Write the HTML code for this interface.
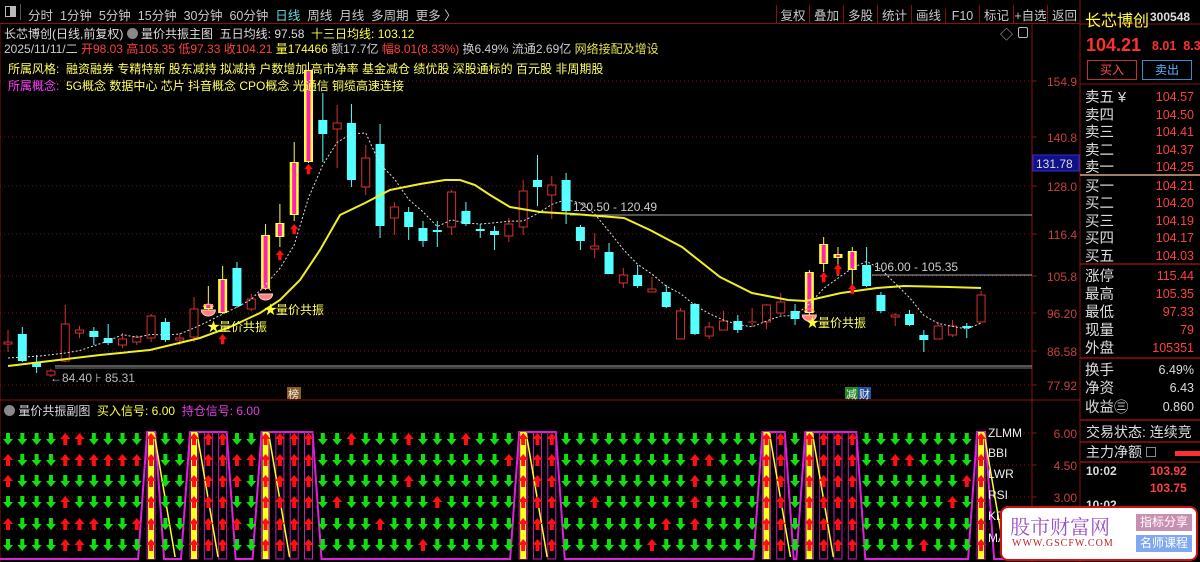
<!DOCTYPE html>
<html><head><meta charset="utf-8">
<style>
*{margin:0;padding:0;box-sizing:border-box}
body{width:1200px;height:562px;background:#000;overflow:hidden;position:relative;font-family:"Liberation Sans","Noto Sans CJK SC",sans-serif;color:#ccc}
.a{position:absolute;white-space:nowrap}
svg{position:absolute;left:0;top:0}
</style></head><body>
<svg id="s" width="1200" height="562" xmlns="http://www.w3.org/2000/svg" font-family="Liberation Sans, Noto Sans CJK SC, sans-serif"></svg>

<div class="a" style="left:0;top:0;width:1080px;height:24px;border-bottom:1px solid #8a1010"></div>
<div class="a" style="left:5px;top:6px;width:11px;height:11px;border:1px solid #bbb"></div>
<div class="a" style="left:10px;top:7px;width:5px;height:9px;background:#bbb"></div>
<div class="a" style="left:20px;top:4px;width:1px;height:16px;background:#555"></div>
<div class="a" style="left:28px;top:5px;font-size:12.5px;color:#c8c8c8;word-spacing:0">分时&nbsp;&nbsp;1分钟&nbsp;&nbsp;5分钟&nbsp;&nbsp;15分钟&nbsp;&nbsp;30分钟&nbsp;&nbsp;60分钟&nbsp;&nbsp;<span style="color:#5fdede">日线</span>&nbsp;&nbsp;周线&nbsp;&nbsp;月线&nbsp;&nbsp;多周期&nbsp;&nbsp;更多 〉</div>
<div class="a" style="left:776px;top:5px;font-size:12.5px;color:#c8c8c8">
<span style="display:inline-block;width:33px;text-align:center;border-left:1px solid #8a1010">复权</span><span style="display:inline-block;width:34px;text-align:center;border-left:1px solid #8a1010">叠加</span><span style="display:inline-block;width:34px;text-align:center;border-left:1px solid #8a1010">多股</span><span style="display:inline-block;width:34px;text-align:center;border-left:1px solid #8a1010">统计</span><span style="display:inline-block;width:34px;text-align:center;border-left:1px solid #8a1010">画线</span><span style="display:inline-block;width:34px;text-align:center;border-left:1px solid #8a1010">F10</span><span style="display:inline-block;width:34px;text-align:center;border-left:1px solid #8a1010">标记</span><span style="display:inline-block;width:34px;text-align:center;border-left:1px solid #8a1010">+自选</span><span style="display:inline-block;width:34px;text-align:center;border-left:1px solid #8a1010">返回</span></div>

<div class="a" style="left:4px;top:25px;font-size:12px;color:#ddd">长芯博创(日线,前复权) <span style="display:inline-block;width:11px;height:11px;border-radius:50%;background:#888;vertical-align:-1px"></span> 量价共振主图&nbsp; 五日均线: 97.58&nbsp; <span style="color:#ffff40">十三日均线: 103.12</span></div>
<div class="a" style="left:4px;top:40px;font-size:12px;color:#ccc">2025/11/11/二 <span style="color:#ff4040">开98.03 高105.35 低97.33 收104.21</span> <span style="color:#ffff40">量174466</span> 额17.7亿 <span style="color:#ff4040">幅8.01(8.33%)</span> 换6.49% 流通2.69亿 <span style="color:#e0e050">网络接配及增设</span></div>
<div class="a" style="left:8px;top:60px;font-size:12px;color:#ffff60">所属风格: &nbsp;融资融券 专精特新 股东减持 拟减持 户数增加 高市净率 基金减仓 绩优股 深股通标的 百元股 非周期股</div>
<div class="a" style="left:8px;top:77px;font-size:12px;color:#ffff60"><span style="color:#ff40ff">所属概念:</span> &nbsp;5G概念 数据中心 芯片 抖音概念 CPO概念 光通信 铜缆高速连接</div>
<div class="a" style="left:1000px;top:24px;font-size:13px;color:#bbb">◇</div>
<div class="a" style="left:1018px;top:27px;width:10px;height:11px;border:1px solid #bbb;border-radius:2px"></div>

<div class="a" style="left:1085px;top:7px;font-size:16px;color:#ffff40">长芯博创</div>
<div class="a" style="left:1150px;top:10px;font-size:12px;color:#ddd;font-weight:bold">300548</div>
<div class="a" style="left:1086px;top:35px;font-size:18px;color:#ff3030;font-weight:bold">104.21</div>
<div class="a" style="left:1152px;top:39px;font-size:12.5px;color:#ff3030;font-weight:bold">8.01&nbsp; 8.33%</div>
<div class="a" style="left:1087px;top:60px;width:50px;height:20px;border:1px solid #c03030;color:#ff5050;font-size:12px;text-align:center;line-height:18px">买入</div>
<div class="a" style="left:1142px;top:60px;width:50px;height:20px;border:1px solid #3a8ad0;color:#60b0ff;font-size:12px;text-align:center;line-height:18px">卖出</div>
<div class="a" style="left:1086px;top:422px;font-size:14px;color:#ddd">交易状态: 连续竞</div>
<div class="a" style="left:1086px;top:442px;font-size:14px;color:#ddd">主力净额 <span style="display:inline-block;width:10px;height:10px;border:1px solid #888;vertical-align:0"></span></div>
<div class="a" style="left:1175px;top:451px;width:25px;height:5px;background:#ff3030"></div>
<div class="a" style="left:1086px;top:464px;font-size:12px;color:#ddd;font-weight:bold">10:02</div>
<div class="a" style="left:1150px;top:464px;font-size:12px;color:#ff4040;font-weight:bold">103.92</div>
<div class="a" style="left:1150px;top:481px;font-size:12px;color:#ff4040;font-weight:bold">103.75</div>
<div class="a" style="left:1086px;top:498px;font-size:12px;color:#ddd;font-weight:bold">10:02</div>

<div class="a" style="left:4px;top:402px;font-size:12px;color:#ddd"><span style="display:inline-block;width:11px;height:11px;border-radius:50%;background:#888;vertical-align:-1px"></span> 量价共振副图&nbsp; <span style="color:#ffff40">买入信号: 6.00</span>&nbsp; <span style="color:#e040e0">持仓信号: 6.00</span></div>

<div class="a" style="left:1000px;top:506px;width:198px;height:55px;background:#fff;border:2px solid #d01010;border-radius:8px"></div>
<div class="a" style="left:1010px;top:511px;font-size:20px;color:#9a50c8;font-family:'Noto Serif CJK SC',serif">股市财富网</div>
<div class="a" style="left:1012px;top:538px;font-size:10px;color:#c02020;font-family:'Liberation Serif',serif;letter-spacing:1px">WWW.GSCFW.COM</div>
<div class="a" style="left:1136px;top:514px;width:56px;height:17px;background:#c890b0;color:#fff;font-size:12px;text-align:center;line-height:17px">指标分享</div>
<div class="a" style="left:1136px;top:535px;width:56px;height:17px;background:#80a8f0;color:#fff;font-size:12px;text-align:center;line-height:17px">名师课程</div>

<script>
var s=document.getElementById('s'),h='';
function L(x1,y1,x2,y2,c,w,d){h+='<line x1="'+x1+'" y1="'+y1+'" x2="'+x2+'" y2="'+y2+'" stroke="'+c+'" stroke-width="'+(w||1)+'"'+(d?' stroke-dasharray="'+d+'"':'')+'/>';}
function R(x,y,w,hh,f,st,sw){h+='<rect x="'+x+'" y="'+y+'" width="'+w+'" height="'+hh+'" fill="'+f+'"'+(st?' stroke="'+st+'" stroke-width="'+(sw||1)+'"':'')+'/>';}
function T(x,y,t,c,fs,a){h+='<text x="'+x+'" y="'+y+'" fill="'+c+'" font-size="'+(fs||12)+'"'+(a?' text-anchor="'+a+'"':'')+'>'+t+'</text>';}
L(1032,24,1032,562,'#8a1010');L(1080,0,1080,562,'#8a1010');L(0,400,1080,400,'#8a1010');L(0,24,0,562,'#8a1010');
var gl=[[81,'154.9'],[137,'140.8'],[186,'128.0'],[234,'116.4'],[276,'105.8'],[313,'96.20'],[351,'86.58'],[385,'77.92']];
gl.forEach(function(g){L(0,g[0],1032,g[0],'#7a1515',1,'1 3');L(1032,g[0],1037,g[0],'#8a1010');T(1077,g[0]+5,g[1],'#c84040',12,'end');});
R(1033,155,46,16,'#10108a','#3030d0');T(1036,168,'131.78','#ddd',12);
L(55,366,1032,366,'#aaa',1);L(55,368,1032,368,'#777',1);
T(50,382,'←84.40 ⊦ 85.31','#bbb',12);
L(570,215,1032,215,'#aaa');T(573,211,'120.50 - 120.49','#ccc',12);
L(872,275,1032,275,'#aaa');T(874,271,'106.00 - 105.35','#ccc',12);
var C=[[0,'r',342,344,330,352],[1,'c',334,361,327,362],[2,'c',362,367,355,373],[3,'r',371,375,369,377],[4,'r',324,361,305,362],[5,'r',330,333,326,338],[6,'c',331,337,327,345],[7,'c',338,343,324,345],[8,'r',339,345,333,348],[9,'r',337,342,335,345],[10,'r',316,338,314,342],[11,'c',322,340,318,342],[12,'r',338,340,333,345],[13,'r',309,337,297,342],[14,'m',304,309,286,311],[15,'m',279,313,266,314],[16,'c',268,306,262,308],[17,'r',299,309,294,311],[18,'m',235,289,224,290],[19,'m',223,237,204,247],[20,'m',162,215,142,221],[21,'m',70,162,62,163],[22,'c',120,134,93,162],[23,'r',123,129,105,168],[24,'c',123,180,104,187],[25,'r',158,187,145,195],[26,'c',144,226,124,238],[27,'r',207,218,202,235],[28,'c',212,227,207,240],[29,'c',228,241,221,247],[30,'c',230,232,221,247],[31,'r',192,227,190,235],[32,'c',211,224,202,226],[33,'c',229,231,224,238],[34,'c',231,235,226,250],[35,'r',224,236,218,242],[36,'r',191,227,180,235],[37,'c',180,187,155,206],[38,'r',185,195,176,219],[39,'c',180,211,173,224],[40,'c',227,241,225,250],[41,'r',246,249,233,258],[42,'c',252,274,243,274],[43,'r',275,283,268,288],[44,'c',275,286,265,288],[45,'r',289,292,277,292],[46,'c',292,307,285,308],[47,'r',311,339,308,339],[48,'c',304,334,303,335],[49,'r',327,336,322,339],[50,'r',321,330,311,330],[51,'c',321,330,315,333],[52,'r',322,323,308,327],[53,'r',305,322,304,329],[54,'r',302,313,293,315],[55,'c',311,319,304,325],[56,'m',272,313,270,315],[57,'m',244,264,237,272],[58,'m',254,258,247,276],[59,'m',251,270,247,286],[60,'c',265,286,247,287],[61,'c',295,311,292,313],[62,'r',315,317,313,326],[63,'c',314,325,310,326],[64,'c',335,340,330,352],[65,'r',326,339,322,339],[66,'r',326,335,320,337],[67,'c',326,328,323,338],[68,'r',295,322,291,322]];
function X(i){return 8+i*14.31;}
var closes=[];
C.forEach(function(c){var x=X(c[0]),t=c[1],bt=c[2],bb=c[3];
 closes.push(t=='c'?bb:bt);
 var wc=t=='c'?'#54ffff':(t=='m'?'#ffff30':'#d83030');
 L(x,c[4],x,bt,wc);L(x,bb,x,c[5],wc);
 if(t=='c')R(x-4.5,bt,9,Math.max(bb-bt,1.5),'#54ffff');
 else if(t=='r'){if(bb-bt<2)L(x-4.5,bt,x+4.5,bt,'#d83030');else R(x-4,bt,8,bb-bt,'none','#d83030');}
 else {R(x-4.5,bt,9,Math.max(bb-bt,3),'#ffff30');R(x-2,bt+1,4,Math.max(bb-bt-2,1),'#ff20c0');}
});
var p='';for(var i=4;i<closes.length;i++){var a=0;for(var k=0;k<5;k++)a+=closes[i-k];p+=(i==4?'M':'L')+X(i)+','+(a/5).toFixed(1);}
p='M8,358L40,356L'+p.slice(1);
h+='<path d="'+p+'" fill="none" stroke="#ddd" stroke-width="1" stroke-dasharray="2 2"/>';
h+='<path d="M8,366 L50,361 L100,355 L150,350 L200,338 L230,327 L260,313 L280,300 L300,280 L320,250 L340,215 L365,203 L390,190 L420,184 L445,180 L460,180 L475,185 L490,195 L510,207 L540,212 L574,214 L624,218 L650,230 L682,247 L720,277 L752,293 L788,300 L806,301 L841,293 L877,288 L904,286 L949,287 L981,288" fill="none" stroke="#f0f020" stroke-width="2"/>';
function up(x,y,c,sc){sc=sc||1;h+='<path d="M'+x+','+y+' l'+(-5*sc)+','+(6*sc)+' h'+(3*sc)+' v'+(6*sc)+' h'+(4*sc)+' v'+(-6*sc)+' h'+(3*sc)+'z" fill="'+c+'"/>';}
function dn(x,y,c){h+='<path d="M'+x+','+(y+12)+' l-5,-6 h3 v-6 h4 v6 h3z" fill="'+c+'"/>';}
[[15,334],[21,164],[20,224],[19,250],[57,272],[58,264],[59,284]].forEach(function(a){up(X(a[0]),a[1],'#ff1010',0.85);});
[[X(14),313],[X(18),297],[X(56),318]].forEach(function(b){h+='<path d="M'+(b[0]-7)+','+(b[1]-3)+' a7,6 0 0 0 14,0z" fill="#ff8080" stroke="#ffcccc"/><path d="M'+(b[0]-5)+','+(b[1]-6)+' a5,3 0 0 1 10,0" fill="none" stroke="#ff8080"/>';});
[[214,326,'量价共振'],[271,309,'量价共振'],[813,322,'量价共振']].forEach(function(st){T(st[0]-7,st[1]+5,'★','#ffff30',13);T(st[0]+5,st[1]+5,st[2],'#ffff60',12);});
R(287,387,14,12,'#8a5a20');T(288,398,'榜','#eee',11);
R(845,387,13,12,'#208a20');T(846,398,'减','#eee',11);R(858,387,13,12,'#2050a0');T(859,398,'财','#eee',11);
[[433,'6.00'],[465,'4.50'],[497,'3.00'],[529,'']].forEach(function(g){L(0,g[0],1032,g[0],'#7a1515',1,'1 3');L(1032,g[0],1037,g[0],'#8a1010');if(g[1])T(1077,g[0]+5,g[1],'#c84040',12,'end');});
var holds=[[10,10],[13,15],[18,21],[36,38],[53,54],[56,59],[68,68]],sig=[10,13,18,36,53,56,68];
function held(i){for(var k=0;k<holds.length;k++)if(i>=holds[k][0]&&i<=holds[k][1])return true;return false;}
var mp='M0,559';holds.forEach(function(hd){var xs=X(hd[0]),xe=X(hd[1]);mp+=' L'+(xs-13)+',559 L'+(xs-4)+',432 L'+(xe+4)+',432 L'+(xe+13)+',559';});mp+=' L1032,559';
h+='<path d="'+mp+'" fill="none" stroke="#e020e0" stroke-width="2"/>';
for(var i=0;i<69;i++)if(held(i)){R(X(i)-4,432,8,127,'none','#c020c0',1);}
sig.forEach(function(i){var x=X(i);R(x-3,432,6,127,'#ffff20');L(x+3,433,x+24,557,'#ffff20',1.5);});
var rows=[440,461,482,503,525,546];
var pat={0:'011010',1:'000000',2:'000000',3:'000000',4:'110111',5:'110011',6:'010010',7:'010000',8:'010000',9:'010010',11:'000000',12:'000000',16:'011010',17:'010000'};
function rnd(i,r){return ((i*73+r*151+i*r*17)%97)/97;}
for(var i=0;i<69;i++){var x=X(i);for(var r=0;r<6;r++){var u;
 if(held(i))u=true;else if(pat[i]!=null)u=pat[i][r]=='1';else u=rnd(i,r)<0.1;
 if(u)up(x,rows[r]-7,'#ff1010');else dn(x,rows[r]-7,'#10e010');}}
['ZLMM','BBI','LWR','RSI','KD','MA'].forEach(function(t,k){T(988,[437,457,478,499,520,542][k],t,'#eee',12);});
var rp=[['卖五 ¥','104.57',96],['卖四','104.50',114],['卖三','104.41',131],['卖二','104.37',149],['卖一','104.25',166],['买一','104.21',185],['买二','104.20',202],['买三','104.19',220],['买四','104.17',237],['买五','104.03',255],['涨停','115.44',275],['最高','105.35',293],['最低','97.33',311],['现量','79',329],['外盘','105351',347]];
rp.forEach(function(r){T(1085,r[2]+6,r[0],'#ddd',14.5);T(1194,r[2]+5,r[1],'#ff4040',12.5,'end');});
[['换手','6.49%',369],['净资','6.43',387],['收益㊂','0.860',406]].forEach(function(r){T(1085,r[2]+6,r[0],'#ddd',14.5);T(1194,r[2]+5,r[1],'#ddd',12.5,'end');});
L(1080,175,1200,175,'#a08060',2);[264,358,420,442,462].forEach(function(y){L(1080,y,1200,y,'#8a1010',1.5);});
L(1080,24,1200,24,'#8a1010');L(1080,84,1200,84,'#8a1010');
s.innerHTML=h;
</script>
</body></html>
